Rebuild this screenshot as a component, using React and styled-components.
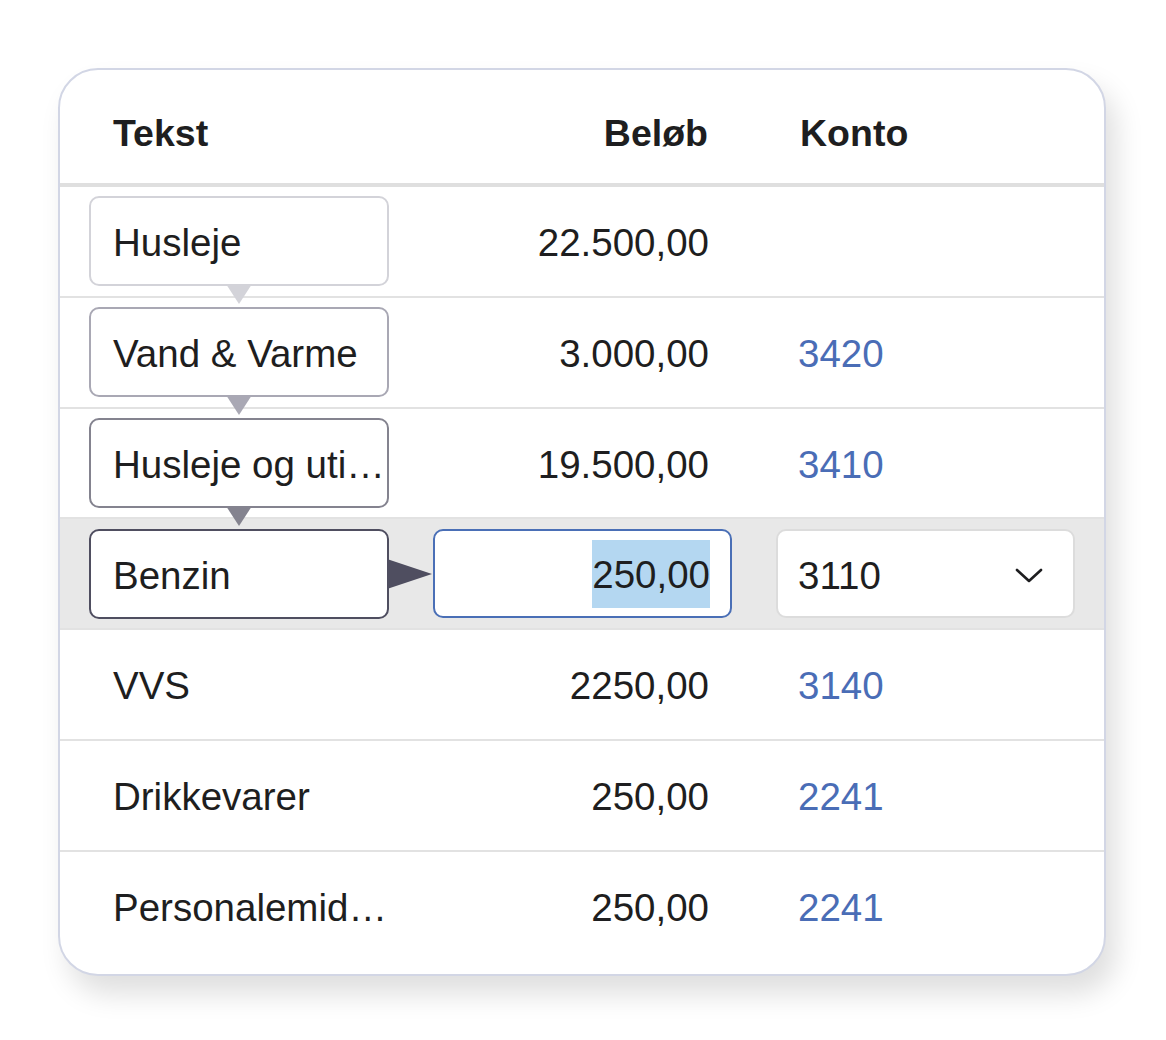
import React from 'react'
import styled, { createGlobalStyle } from 'styled-components'

const TONES = ['#d3d3d9', '#a9a8b4', '#84838f', '#4f4e60']

const ROWS = [
  { text: 'Husleje', amount: '22.500,00', konto: '', level: 0 },
  { text: 'Vand & Varme', amount: '3.000,00', konto: '3420', level: 1 },
  { text: 'Husleje og uti…', amount: '19.500,00', konto: '3410', level: 2 },
  { text: 'Benzin', amount: '250,00', konto: '3110', level: 3, active: true },
  { text: 'VVS', amount: '2250,00', konto: '3140' },
  { text: 'Drikkevarer', amount: '250,00', konto: '2241' },
  { text: 'Personalemid…', amount: '250,00', konto: '2241' }
]

const GlobalStyle = createGlobalStyle`
  body {
    margin: 0;
    background: #ffffff;
    font-family: "Liberation Sans", Arial, Helvetica, sans-serif;
    color: #1e1e20;
  }
`

const App = () => (
  <>
    <GlobalStyle />
    <Card>
      <Header>
        <HeadCell>Tekst</HeadCell>
        <HeadCell $align="right">Beløb</HeadCell>
        <HeadCell>Konto</HeadCell>
      </Header>
      {ROWS.map((row, i) => (
        <Row key={i} $active={row.active}>
          {row.level !== undefined ? (
            <TextBox $tone={TONES[row.level]}>
              {row.text}
              {row.active ? (
                <RightPointer $tone={TONES[row.level]} />
              ) : (
                <DownPointer $tone={TONES[row.level]} />
              )}
            </TextBox>
          ) : (
            <Cell $pad="0 2px 0 24px">{row.text}</Cell>
          )}

          {row.active ? (
            <AmountInput>
              <Selected>{row.amount}</Selected>
            </AmountInput>
          ) : (
            <Cell $align="right">{row.amount}</Cell>
          )}

          {row.active ? (
            <Select>
              <span>{row.konto}</span>
              <svg width="28" height="16" viewBox="0 0 28 16">
                <polyline
                  points="2,2 14,13 26,2"
                  fill="none"
                  stroke="#1e1e20"
                  strokeWidth="2.6"
                  strokeLinecap="round"
                  strokeLinejoin="round"
                />
              </svg>
            </Select>
          ) : (
            <Cell>
              <Account>{row.konto}</Account>
            </Cell>
          )}
        </Row>
      ))}
    </Card>
  </>
)

const Card = styled.div`
  box-sizing: border-box;
  width: 1048px;
  margin: 68px 0 65px 58px;
  padding-bottom: 13px;
  background: #ffffff;
  border: 2px solid #d2d6e5;
  border-radius: 40px;
  box-shadow: 10px 18px 28px rgba(0, 0, 0, 0.13);
  overflow: hidden;
`

const Grid = styled.div`
  display: grid;
  grid-template-columns: 300px 299px 299px;
  column-gap: 44px;
  padding-left: 29px;
  font-size: 38.5px;
  line-height: 1;
`

const Header = styled(Grid)`
  box-sizing: border-box;
  height: 117px;
  padding-top: 14px;
  align-items: center;
  border-bottom: 4px solid #dfdfdf;
  font-size: 37.5px;
  font-weight: 700;
`

const HeadCell = styled.div`
  padding: 0 24px;
  text-align: ${p => p.$align || 'left'};
`

const Row = styled(Grid)`
  height: 108.8px;
  align-items: center;
  background: ${p => (p.$active ? '#e8e8e8' : 'transparent')};
  border-bottom: 2px solid #e2e2e2;

  &:last-child {
    border-bottom: none;
  }
`

const Cell = styled.div`
  min-width: 0;
  padding: ${p => p.$pad || '0 23px 0 22px'};
  padding-top: 4px;
  text-align: ${p => p.$align || 'left'};
  white-space: nowrap;
`

const TextBox = styled.div`
  position: relative;
  box-sizing: border-box;
  height: 90px;
  display: flex;
  align-items: center;
  padding: 4px 2px 0 22px;
  background: #ffffff;
  border: 2px solid ${p => p.$tone};
  border-radius: 10px;
  white-space: nowrap;
`

const DownPointer = styled.span`
  position: absolute;
  top: 100%;
  left: 50%;
  transform: translateX(-50%);
  width: 0;
  height: 0;
  border-left: 13px solid transparent;
  border-right: 13px solid transparent;
  border-top: 20px solid ${p => p.$tone};
  z-index: 2;
`

const RightPointer = styled.span`
  position: absolute;
  left: 100%;
  top: 50%;
  transform: translateY(-50%);
  width: 0;
  height: 0;
  border-top: 15px solid transparent;
  border-bottom: 15px solid transparent;
  border-left: 45px solid ${p => p.$tone};
`

const AmountInput = styled.div`
  box-sizing: border-box;
  height: 89px;
  display: flex;
  align-items: center;
  justify-content: flex-end;
  padding: 0 20px;
  background: #ffffff;
  border: 2px solid #4a6fb6;
  border-radius: 10px;
`

const Selected = styled.span`
  display: inline-block;
  line-height: 66px;
  padding-top: 2px;
  background: #b4d7f1;
`

const Select = styled.div`
  box-sizing: border-box;
  height: 89px;
  display: flex;
  align-items: center;
  justify-content: space-between;
  padding: 4px 30px 0 20px;
  background: #ffffff;
  border: 2px solid #dcdcdc;
  border-radius: 10px;

  svg {
    display: block;
  }
`

const Account = styled.span`
  color: #4a6db6;
`

export default App
